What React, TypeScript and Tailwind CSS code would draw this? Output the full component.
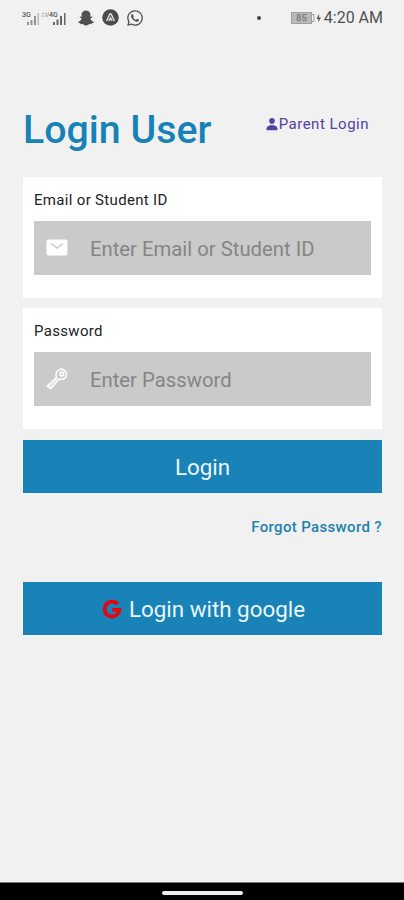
import type { ReactNode } from "react";
import { FaSnapchatGhost, FaWhatsapp } from "react-icons/fa";
import { IoPerson } from "react-icons/io5";

function SignalIcon(): React.JSX.Element {
  return (
    <svg width="46" height="16" viewBox="0 0 46 16" className="shrink-0">
      <g fill="#929292">
        <rect x="5" y="12" width="2" height="3" />
        <rect x="8.5" y="10" width="2" height="5" />
        <rect x="12" y="6" width="2" height="9" />
        <rect x="15.5" y="3" width="1.5" height="12" opacity=".6" />
      </g>
      <g fill="#666">
        <rect x="31" y="12" width="2" height="3" />
        <rect x="34.5" y="9.5" width="2" height="5.5" />
        <rect x="38" y="6" width="2" height="9" />
        <rect x="42" y="3" width="1.5" height="12" />
      </g>
      <g fill="#555" fontFamily="Roboto, sans-serif" fontSize="7" fontWeight="500">
        <text x="0" y="6.5">3G</text>
        <text x="27" y="6.5">4G</text>
      </g>
      <path d="M20 3.5h2.5M19 6h3M24.5 2.5l-1 4.5M26.5 2.5l-1 4.5" stroke="#aaa" strokeWidth="1" />
    </svg>
  );
}

function ExpoIcon(): React.JSX.Element {
  return (
    <svg width="17" height="17" viewBox="0 0 17 17" className="shrink-0">
      <circle cx="8.5" cy="8.5" r="8.3" fill="#4b4b4b" />
      <path
        d="M4.6 12 7.7 5.3q.8-1.1 1.6 0l3.1 6.7M6.8 12l1.7-3 1.7 3"
        fill="none"
        stroke="#e4e4e4"
        strokeWidth="1.4"
      />
    </svg>
  );
}

function BatteryIcon(): React.JSX.Element {
  return (
    <svg width="31" height="12" viewBox="0 0 31 12" className="shrink-0">
      <rect x="0.5" y="0.5" width="20" height="11" fill="#b9b9b9" stroke="#a0a0a0" />
      <path d="M21 2.5h2v7h-2" fill="none" stroke="#999" />
      <text x="5" y="9.3" fill="#777" fontFamily="Roboto, sans-serif" fontSize="9.5" fontWeight="500">
        85
      </text>
      <path d="M28.2 1.5 25.5 7h2l-.3 3.5L30 5.5h-2z" fill="#555" />
    </svg>
  );
}

function MailIcon(): React.JSX.Element {
  return (
    <svg width="22" height="22" viewBox="0 0 22 22">
      <rect x="0.5" y="2.5" width="21" height="16" rx="2.5" fill="#fff" />
      <path d="m5 6.5 6 4.6 6-4.6" fill="none" stroke="#cacaca" strokeWidth="1.3" />
    </svg>
  );
}

function KeyIcon(): React.JSX.Element {
  return (
    <svg width="22" height="22" viewBox="0 0 22 22" fill="none" stroke="#fff" strokeWidth="1.6" strokeLinejoin="round">
      <path d="M10.5 9.6C9.5 6.4 10 4.2 11.9 2.5c2-1.6 4.9-1.6 6.8.1 2.1 1.9 2.3 4.9.8 6.8-1.7 2-3.9 2.3-6.3 1.5L4.6 20.6 1.3 18.1z" />
      <circle cx="15.8" cy="6" r="1.9" />
      <path d="m10.8 11-7.6 8" strokeWidth="1" />
    </svg>
  );
}

function GoogleIcon(): React.JSX.Element {
  return (
    <svg width="20" height="20" viewBox="0 0 20 20" fill="none" stroke="#e30613" strokeWidth="3.8" className="mb-[2px] shrink-0">
      <path d="M15.6 5.2A7.4 7.4 0 1 0 17.4 10.9H10.2" />
    </svg>
  );
}

function Field({
  label,
  placeholder,
  type,
  icon,
}: {
  label: string;
  placeholder: string;
  type: string;
  icon: ReactNode;
}): React.JSX.Element {
  return (
    <label className="block h-[121px] bg-white px-[11px] pt-3">
      <span className="block h-8 text-[15px] leading-[22px] tracking-[0.32px] text-[#222]">{label}</span>
      <span className="flex h-[54px] items-center bg-[#cacaca] pl-3">
        {icon}
        <input
          type={type}
          placeholder={placeholder}
          className="ml-[22px] w-[270px] bg-transparent p-0 pt-[3px] text-[20.3px] outline-none placeholder:text-[#858585]"
        />
      </span>
    </label>
  );
}

export default function App(): React.JSX.Element {
  return (
    <div className="flex h-[900px] w-[404px] flex-col overflow-hidden bg-[#f1f1f1] font-['Roboto',sans-serif]">
      <header className="flex h-[35px] shrink-0 items-center pl-[22px] pr-[21px] text-[#505050]">
        <SignalIcon />
        <FaSnapchatGhost className="ml-[10px] size-4" />
        <span className="ml-2">
          <ExpoIcon />
        </span>
        <FaWhatsapp className="ml-[7px] size-[18px]" />
        <span className="ml-auto mr-[30px] size-1 rounded-full bg-[#444]" />
        <BatteryIcon />
        <span className="ml-[2px] text-[16px] leading-5">4:20 AM</span>
      </header>

      <main className="flex-1 pl-[23px] pr-[22px]">
        <div className="flex h-[142px] justify-between pr-[13px] pt-[69px]">
          <h1 className="text-[39.3px] font-medium leading-[52px] text-[#1782b5]">Login User</h1>
          <a href="#" className="mt-[10px] flex h-5 items-center text-[15px] tracking-[0.5px] text-[#5143a0]">
            <IoPerson className="size-[14px]" />
            Parent Login
          </a>
        </div>

        <form onSubmit={(event) => event.preventDefault()}>
          <div className="space-y-[10px]">
            <Field label="Email or Student ID" placeholder="Enter Email or Student ID" type="text" icon={<MailIcon />} />
            <Field label="Password" placeholder="Enter Password" type="password" icon={<KeyIcon />} />
          </div>

          <button type="submit" className="mt-[11px] flex h-[53px] w-full items-center justify-center bg-[#1982b6] pt-[2px] text-[22.4px] text-[#e9f7fd]">
            Login
          </button>
          <a href="#" className="mt-6 block text-right text-[15px] font-medium leading-5 tracking-[0.35px] text-[#1d82ad]">
            Forgot Password ?
          </a>
          <button type="button" className="mt-[45px] flex h-[53px] w-full items-center justify-center gap-[7px] bg-[#1982b6] pl-[2px] pt-[2px] text-[22.4px] text-[#e9f7fd]">
            <GoogleIcon />
            Login with google
          </button>
        </form>
      </main>

      <footer className="flex h-[18px] shrink-0 items-center justify-center border-t border-[#777] bg-black pt-[2px]">
        <span className="h-1 w-[81px] rounded-sm bg-[#eee]" />
      </footer>
    </div>
  );
}
